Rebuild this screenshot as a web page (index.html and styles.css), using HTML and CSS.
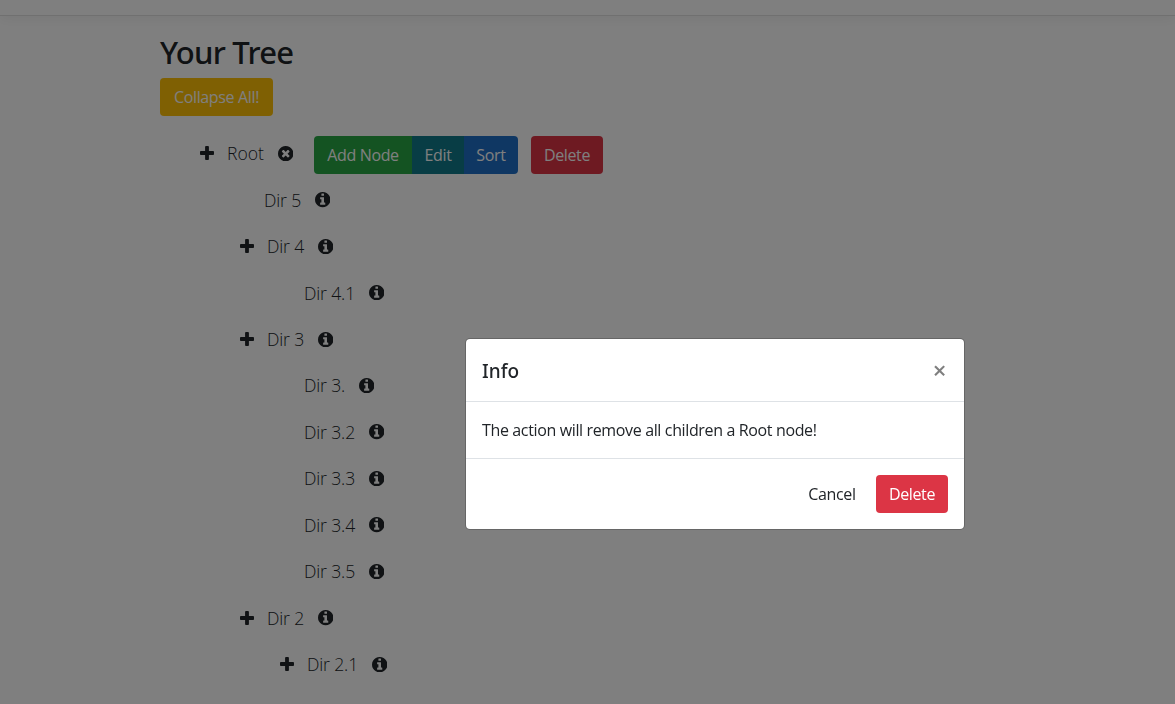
FILE: index.html
```html
<!DOCTYPE html>
<html lang="en">
<head>
<meta charset="utf-8">
<title>Your Tree</title>
<link rel="stylesheet" href="styles.css">
</head>
<body>
<svg class="sprite" aria-hidden="true">
  <symbol id="plus" viewBox="0 0 1408 1408"><path d="M1408 608v192q0 40-28 68t-68 28H896v416q0 40-28 68t-68 28H608q-40 0-68-28t-28-68V896H96q-40 0-68-28T0 800V608q0-40 28-68t68-28h416V96q0-40 28-68t68-28h192q40 0 68 28t28 68v416h416q40 0 68 28t28 68z"/></symbol>
  <symbol id="info" viewBox="0 0 1536 1536"><path d="M1024 1248v-160q0-14-9-23t-23-9h-96V544q0-14-9-23t-23-9H544q-14 0-23 9t-9 23v160q0 14 9 23t23 9h96v320h-96q-14 0-23 9t-9 23v160q0 14 9 23t23 9h448q14 0 23-9t9-23zM896 352V192q0-14-9-23t-23-9H672q-14 0-23 9t-9 23v160q0 14 9 23t23 9h192q14 0 23-9t9-23zM1536 768q0 209-103 385.500T1153.500 1433 768 1536t-385.500-103T103 1153.500 0 768t103-385.500T382.500 103 768 0t385.500 103T1433 382.500 1536 768z"/></symbol>
  <symbol id="close" viewBox="0 0 1536 1536"><path d="M1149 994q0-26-19-45L949 768l181-181q19-19 19-45 0-27-19-46l-90-90q-19-19-46-19-26 0-45 19L768 587 587 406q-19-19-45-19-27 0-46 19l-90 90q-19 19-19 46 0 26 19 45l181 181-181 181q-19 19-19 45 0 27 19 46l90 90q19 19 46 19 26 0 45-19l181-181 181 181q19 19 45 19 27 0 46-19l90-90q19-19 19-46zM1536 768q0 209-103 385.500T1153.500 1433 768 1536t-385.500-103T103 1153.500 0 768t103-385.500T382.500 103 768 0t385.500 103T1433 382.500 1536 768z"/></symbol>
</svg>
<div class="navbar"></div>
<main class="container">
  <h2 class="title">Your Tree</h2>
  <button class="btn warning">Collapse All!</button>
  <div class="tree">
    <div class="node"><svg class="plus"><use href="#plus"/></svg><span class="label root">Root</span><svg class="icon"><use href="#close"/></svg>
      <div class="actions"><div class="group"><button class="btn success">Add Node</button><button class="btn info">Edit</button><button class="btn primary">Sort</button></div><button class="btn danger">Delete</button></div>
    </div>
    <div class="node leaf l1"><span class="label">Dir 5</span><svg class="icon"><use href="#info"/></svg></div>
    <div class="node l1"><svg class="plus"><use href="#plus"/></svg><span class="label">Dir 4</span><svg class="icon"><use href="#info"/></svg></div>
    <div class="node leaf l2"><span class="label long">Dir 4.1</span><svg class="icon"><use href="#info"/></svg></div>
    <div class="node l1"><svg class="plus"><use href="#plus"/></svg><span class="label">Dir 3</span><svg class="icon"><use href="#info"/></svg></div>
    <div class="node leaf l2"><span class="label mid">Dir 3.</span><svg class="icon"><use href="#info"/></svg></div>
    <div class="node leaf l2"><span class="label long">Dir 3.2</span><svg class="icon"><use href="#info"/></svg></div>
    <div class="node leaf l2"><span class="label long">Dir 3.3</span><svg class="icon"><use href="#info"/></svg></div>
    <div class="node leaf l2"><span class="label long">Dir 3.4</span><svg class="icon"><use href="#info"/></svg></div>
    <div class="node leaf l2"><span class="label long">Dir 3.5</span><svg class="icon"><use href="#info"/></svg></div>
    <div class="node l1"><svg class="plus"><use href="#plus"/></svg><span class="label">Dir 2</span><svg class="icon"><use href="#info"/></svg></div>
    <div class="node l2"><svg class="plus"><use href="#plus"/></svg><span class="label long">Dir 2.1</span><svg class="icon"><use href="#info"/></svg></div>
  </div>
</main>
<div class="backdrop">
  <div class="modal" role="dialog">
    <div class="modal-header"><h5>Info</h5><span class="x">×</span></div>
    <div class="modal-body">The action will remove all children a Root node!</div>
    <div class="modal-footer"><button class="btn light">Cancel</button><button class="btn danger">Delete</button></div>
  </div>
</div>
</body>
</html>
```
FILE: styles.css
```css
* { box-sizing: border-box; }
body {
  margin: 0;
  height: 704px;
  overflow: hidden;
  background: #fff;
  color: #212529;
  font: 400 16px/24px "Open Sans", "Noto Sans", sans-serif;
}
.sprite { display: none; }
.navbar {
  height: 16px;
  border-bottom: 1px solid #e0e0e0;
  box-shadow: 0 4px 12px rgba(0, 0, 0, .05);
}
.container { padding: 17px 0 0 160px; }
.title {
  margin: 0 0 7px;
  font-family: "Noto Sans", "Open Sans", sans-serif;
  font-size: 31px;
  font-weight: 500;
  letter-spacing: -.75px;
  line-height: 38px;
}
.btn {
  display: block;
  height: 38px;
  padding: 0;
  border: 0;
  border-radius: 4px;
  color: #fff;
  font: 400 16px/38px "Open Sans", "Noto Sans", sans-serif;
  letter-spacing: -.35px;
  text-align: center;
  white-space: nowrap;
}
.warning { width: 113px; background: #ffc107; }
.success { width: 98px; background: #28a745; }
.info { width: 52px; background: #117a8b; }
.primary { width: 54px; background: #1f6fc6; }
.danger { width: 72px; background: #dc3545; }
.light { width: 72px; background: transparent; color: #212529; }
.group { display: flex; }
.group .btn { border-radius: 0; }
.group .btn:first-child { border-radius: 4px 0 0 4px; }
.group .btn:last-child { border-radius: 0 4px 4px 0; }
.tree { padding: 14.5px 0 0 40px; }
.node {
  display: flex;
  align-items: center;
  gap: 13px;
  height: 46.45px;
}
.l1 { padding-left: 40px; }
.l2 { padding-left: 80px; }
.leaf.l1 { padding-left: 64px; }
.leaf.l2 { padding-left: 104px; }
.label {
  width: 38px;
  padding-bottom: 1px;
  font-size: 17.6px;
  font-weight: 300;
  letter-spacing: -.15px;
  line-height: 26px;
  white-space: nowrap;
}
.root { letter-spacing: 0; }
.mid { width: 42px; }
.long { width: 51.6px; }
.plus { width: 14px; height: 14px; margin-top: -1px; fill: #212529; }
.icon { width: 15.4px; height: 15.4px; margin-top: -.5px; fill: #212529; }
.actions { display: flex; gap: 13px; padding: 3px 0 0 7.6px; }
.backdrop {
  position: fixed;
  inset: 0;
  padding: 338px 0 0 465px;
  background: rgba(0, 0, 0, .5);
}
.modal {
  width: 500px;
  border: 1px solid rgba(0, 0, 0, .2);
  border-radius: 5px;
  background: #fff;
  background-clip: padding-box;
}
.modal-header {
  display: flex;
  justify-content: space-between;
  height: 63px;
  padding: 16px;
  border-bottom: 1px solid #dee2e6;
}
.modal-header h5 {
  margin: 0;
  font-family: "Noto Sans", "Open Sans", sans-serif;
  font-size: 19px;
  font-weight: 500;
  line-height: 32px;
}
.x { width: 17px; color: #7f7f7f; font-size: 24px; font-weight: 600; line-height: 29px; text-align: center; }
.modal-body { height: 56px; padding: 16px; letter-spacing: -.36px; }
.modal-footer {
  display: flex;
  justify-content: flex-end;
  gap: 8px;
  height: 71px;
  padding: 16px;
  border-top: 1px solid #dee2e6;
}
```
